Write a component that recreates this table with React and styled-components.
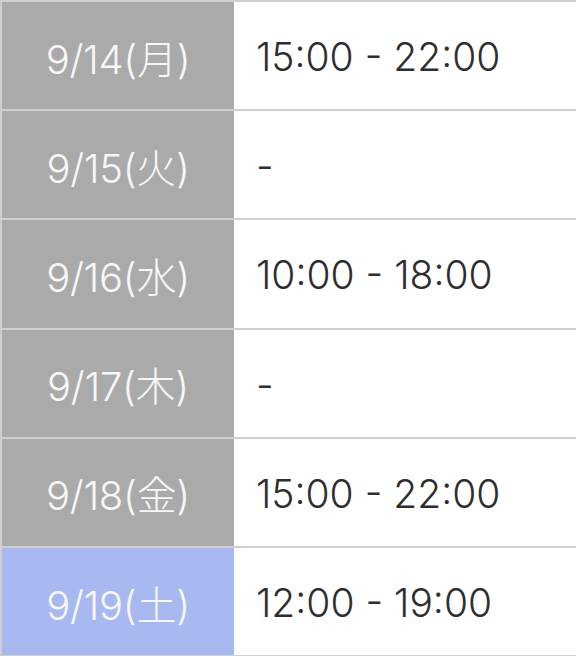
import React from "react";
import styled, { createGlobalStyle } from "styled-components";

const Global = createGlobalStyle`
  html, body { margin: 0; padding: 0; background: #fff; }
  body { font-family: Inter, "Noto Sans CJK JP", sans-serif; }
`;

const Table = styled.div`
  width: 100%;
  border-top: 2px solid #cfcfcf;
  border-left: 2px solid #cfcfcf;
  box-sizing: border-box;
`;

const Row = styled.div`
  display: grid;
  grid-template-columns: 232px 1fr;
  height: 109.2px;
  border-bottom: 2px solid #cfcfcf;
  box-sizing: border-box;
`;

const DateCell = styled.div`
  display: flex;
  align-items: center;
  justify-content: center;
  padding-top: 2px;
  background: ${(p) => (p.$sat ? "#a8b9f1" : "#aaaaaa")};
  color: #f7f7f7;
  font-family: Inter, "Noto Sans CJK JP", sans-serif;
  font-size: 40px;
  font-weight: 300;
  letter-spacing: -0.3px;
`;

const TimeCell = styled.div`
  display: flex;
  align-items: center;
  padding-left: 22px;
  padding-top: 2px;
  background: #fff;
  color: #2e2e2e;
  font-family: Inter, "Noto Sans CJK JP", sans-serif;
  font-size: 39px;
  font-weight: 300;
`;

const rows = [
  { d: "9/14(月)", t: "15:00 - 22:00" },
  { d: "9/15(火)", t: "-" },
  { d: "9/16(水)", t: "10:00 - 18:00" },
  { d: "9/17(木)", t: "-" },
  { d: "9/18(金)", t: "15:00 - 22:00" },
  { d: "9/19(土)", t: "12:00 - 19:00", sat: true },
];

export default function App() {
  return (
    <>
      <Global />
      <Table>
        {rows.map((r) => (
          <Row key={r.d}>
            <DateCell $sat={r.sat}>{r.d}</DateCell>
            <TimeCell>{r.t}</TimeCell>
          </Row>
        ))}
      </Table>
    </>
  );
}
